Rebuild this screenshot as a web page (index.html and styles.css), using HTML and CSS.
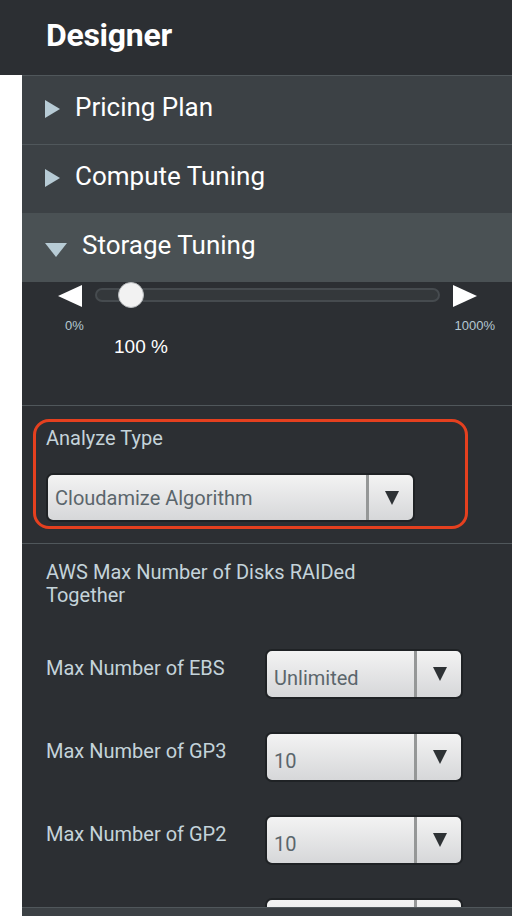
FILE: index.html
```html
<!DOCTYPE html>
<html lang="en">
<head>
<meta charset="utf-8">
<title>Designer</title>
<link rel="stylesheet" href="styles.css">
</head>
<body>
<div class="app">
  <header class="topbar"><h1 class="title">Designer</h1></header>
  <div class="main">
    <div class="gutter"></div>
    <aside class="panel">
      <div class="scroll">
        <div class="acc-row"><span class="tri-right"></span><span class="acc-label">Pricing Plan</span></div>
        <div class="acc-row"><span class="tri-right"></span><span class="acc-label">Compute Tuning</span></div>
        <div class="acc-row acc-open"><span class="tri-down"></span><span class="acc-label">Storage Tuning</span></div>

        <section class="slider-sec">
          <div class="slider-row">
            <span class="arrow-left"></span>
            <div class="track"><span class="thumb" style="left:10%"></span></div>
            <span class="arrow-right"></span>
          </div>
          <div class="ticks"><span>0%</span><span>1000%</span></div>
          <div class="slider-value">100 %</div>
        </section>

        <section class="analyze-sec">
          <div class="highlight">
            <div class="field-label">Analyze Type</div>
            <div class="select select-wide">
              <span class="select-text">Cloudamize Algorithm</span>
              <span class="select-btn"><span class="caret"></span></span>
            </div>
          </div>
        </section>

        <section class="aws-sec">
          <div class="field-label aws-title">AWS Max Number of Disks RAIDed Together</div>
          <div class="form-grid">
            <div class="field-label row-label">Max Number of EBS</div>
            <div class="select select-sm">
              <span class="select-text low">Unlimited</span>
              <span class="select-btn"><span class="caret"></span></span>
            </div>
            <div class="field-label row-label">Max Number of GP3</div>
            <div class="select select-sm">
              <span class="select-text low">10</span>
              <span class="select-btn"><span class="caret"></span></span>
            </div>
            <div class="field-label row-label">Max Number of GP2</div>
            <div class="select select-sm">
              <span class="select-text low">10</span>
              <span class="select-btn"><span class="caret"></span></span>
            </div>
            <div class="field-label row-label"></div>
            <div class="select select-sm">
              <span class="select-text low"></span>
              <span class="select-btn"><span class="caret"></span></span>
            </div>
          </div>
        </section>
      </div>
      <div class="acc-row footer-row"></div>
    </aside>
  </div>
</div>
</body>
</html>
```

FILE: styles.css
```css
* { box-sizing: border-box; }

html, body {
  margin: 0;
  padding: 0;
  background: #ffffff;
  font-family: Roboto, "Noto Sans", "Liberation Sans", sans-serif;
  overflow: hidden;
}

.app {
  width: 512px;
  height: 916px;
  display: flex;
  flex-direction: column;
}

.topbar {
  height: 75px;
  background: #2c2f33;
  padding-left: 46px;
  flex: none;
}

.title {
  margin: 0;
  padding-top: 16px;
  font-size: 32px;
  line-height: 38px;
  font-weight: 700;
  color: #ffffff;
  letter-spacing: -0.3px;
}

.main {
  flex: 1;
  display: flex;
  min-height: 0;
}

.gutter {
  width: 22px;
  flex: none;
  background: #ffffff;
}

.panel {
  flex: 1;
  background: #2c2f33;
  display: flex;
  flex-direction: column;
}

.scroll {
  height: 832px;
  overflow: hidden;
  flex: none;
}

/* accordion rows */
.acc-row {
  height: 69px;
  border-top: 1px solid #50575b;
  background: #3c4145;
  display: flex;
  align-items: center;
  padding-left: 23px;
  padding-bottom: 6px;
}

.acc-open {
  background: #4a5154;
  border-top-color: #4a5154;
}

.footer-row {
  flex: none;
}

.tri-right {
  width: 0;
  height: 0;
  border-top: 9px solid transparent;
  border-bottom: 9px solid transparent;
  border-left: 15px solid #b7cbd5;
  margin-right: 15px;
  margin-top: 4px;
}

.tri-down {
  width: 0;
  height: 0;
  border-left: 11px solid transparent;
  border-right: 11px solid transparent;
  border-top: 14px solid #b7cbd5;
  margin-right: 15px;
  margin-top: 10px;
}

.acc-label {
  font-size: 26px;
  color: #ffffff;
}

/* slider */
.slider-sec {
  height: 123px;
}

.slider-row {
  height: 26px;
  display: flex;
  align-items: center;
  padding-left: 36px;
  gap: 13px;
}

.arrow-left {
  width: 0;
  height: 0;
  border-top: 11.5px solid transparent;
  border-bottom: 11.5px solid transparent;
  border-right: 24px solid #ffffff;
  margin-top: 2px;
}

.arrow-right {
  width: 0;
  height: 0;
  border-top: 11.5px solid transparent;
  border-bottom: 11.5px solid transparent;
  border-left: 24px solid #ffffff;
  margin-top: 2px;
}

.track {
  position: relative;
  width: 345px;
  height: 14px;
  border-radius: 7px;
  background: #34383b;
  border: 2px solid #464b4f;
}

.thumb {
  position: absolute;
  top: 50%;
  width: 26px;
  height: 26px;
  border-radius: 50%;
  background: #f2f2f2;
  border: 1.5px solid #b9bcbe;
  transform: translate(-50%, -50%);
}

.ticks {
  display: flex;
  justify-content: space-between;
  padding: 0 17px 0 43px;
  margin-top: 10px;
  font-family: "Liberation Sans", Arial, sans-serif;
  font-size: 13px;
  line-height: 15px;
  color: #b4c8d2;
}

.slider-value {
  margin-top: 3px;
  padding-left: 92px;
  font-family: "Liberation Sans", Arial, sans-serif;
  font-size: 19px;
  line-height: 21px;
  color: #ffffff;
}

/* analyze */
.analyze-sec {
  border-top: 1px solid #50575b;
  height: 138px;
  padding-top: 13px;
  padding-left: 11px;
}

.highlight {
  width: 435px;
  height: 110px;
  border: 3px solid #e5401f;
  border-radius: 16px;
  padding: 5px 0 4px 10px;
}

.field-label {
  font-size: 20px;
  line-height: 22px;
  color: #c4d3da;
}

.highlight .select {
  margin-top: 24px;
}

/* select */
.select {
  display: flex;
  height: 49px;
  border: 2px solid #1f2225;
  border-radius: 7px;
  background: linear-gradient(#f3f3f3, #d6d7d9);
  overflow: hidden;
}

.select-wide { width: 369px; }

.select-sm {
  width: 198px;
  height: 50px;
}

.select-text {
  flex: 1;
  display: flex;
  align-items: center;
  padding-left: 7px;
  font-size: 20px;
  color: #5b666c;
}

.select-text.low {
  padding-top: 8px;
}

.select-btn {
  width: 47px;
  flex: none;
  border-left: 3px solid #959797;
  display: flex;
  align-items: center;
  justify-content: center;
}

.caret {
  width: 0;
  height: 0;
  border-left: 7.5px solid transparent;
  border-right: 7.5px solid transparent;
  border-top: 14px solid #2e3235;
  margin-left: 2px;
}

/* aws */
.aws-sec {
  border-top: 1px solid #50575b;
  padding: 17px 0 0 24px;
}

.aws-title {
  max-width: 330px;
  line-height: 23px;
}

.form-grid {
  margin-top: 42px;
  display: grid;
  grid-template-columns: 219px 198px;
  row-gap: 33px;
}

.row-label {
  padding-top: 8px;
  line-height: 23px;
}
```
